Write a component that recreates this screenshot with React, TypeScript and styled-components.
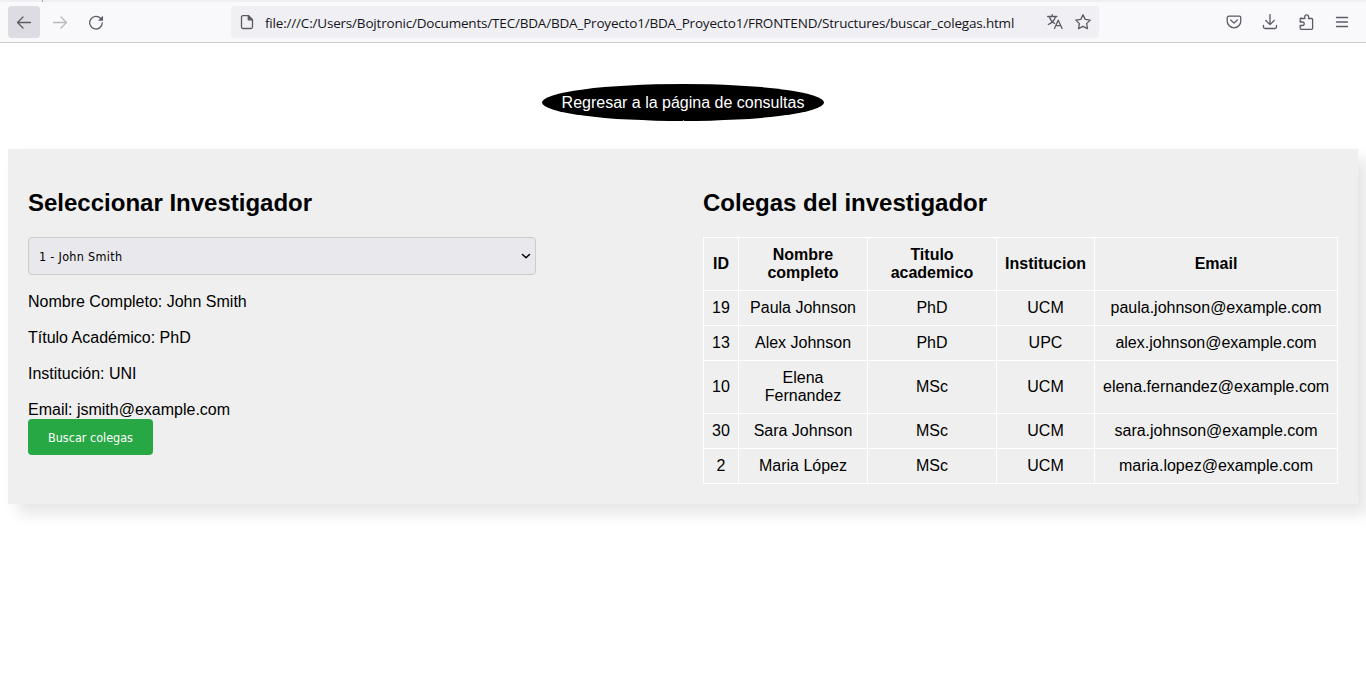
import React from "react";
import styled, { createGlobalStyle } from "styled-components";

const GlobalStyle = createGlobalStyle`
  * { box-sizing: border-box; }
  body { margin: 0; background: #fff; color: #000; font: 16px/18px "Liberation Sans", Arial, sans-serif; }
`;

const Page = styled.div`
  height: 684px;
  overflow: hidden;
`;
const TabStrip = styled.div`
  display: flex;
  height: 2px;
  background: #f0f0f4;
`;
const TabLine = styled.div`
  width: 1px;
  height: 2px;
  margin-left: 42px;
  background: #a5a5a9;
`;
const Toolbar = styled.header`
  display: flex;
  align-items: center;
  height: 41px;
  padding: 0 8px;
  background: #f9f9fb;
  border-bottom: 1px solid #ccccce;
`;
const NavButton = styled.button<{ $active?: boolean; $dim?: boolean }>`
  display: grid;
  place-items: center;
  width: 32px;
  height: 32px;
  margin: 0 4px 0 0;
  padding: 0;
  border: 0;
  border-radius: 4px;
  color: #5b5b66;
  background: ${(p) => (p.$active ? "#dcdce2" : "transparent")};
  opacity: ${(p) => (p.$dim ? 0.4 : 1)};
`;
const AddressBar = styled.div`
  display: flex;
  align-items: center;
  width: 868px;
  height: 32px;
  margin-left: 115px;
  padding: 0 8px;
  border-radius: 4px;
  background: #f0f0f4;
  color: #5b5b66;
`;
const Address = styled.span`
  flex: 1;
  margin-left: 10px;
  padding-top: 2px;
  color: #15141a;
  font: 13.5px/20px "Open Sans", "Noto Sans", sans-serif;
  letter-spacing: -0.19px;
  white-space: nowrap;
`;
const AddressActions = styled.div`
  display: flex;
  gap: 12px;
`;
const ToolbarActions = styled.div`
  display: flex;
  gap: 20px;
  margin-left: auto;
  padding-right: 8px;
  color: #5b5b66;
`;
const Icon = styled.svg`
  display: block;
  width: 16px;
  height: 16px;
  fill: none;
  stroke: currentColor;
  stroke-width: 1.3;
  stroke-linecap: round;
  stroke-linejoin: round;
`;

const LinkRow = styled.nav`
  display: flex;
  justify-content: center;
  padding: 41px 0 28px;
`;
const BackLink = styled.a`
  display: flex;
  flex-direction: column;
  align-items: center;
  justify-content: space-between;
  width: 282px;
  height: 37px;
  padding-top: 10px;
  border-radius: 50%;
  background: #000;
  color: #fff;
  &::after {
    content: "";
    width: 1px;
    height: 1px;
    background: #aaa;
  }
`;
const Panel = styled.main`
  display: grid;
  grid-template-columns: 635px 635px;
  column-gap: 40px;
  height: 355px;
  margin: 0 8px;
  padding: 20px;
  background: #efefef;
  box-shadow: 10px 10px 15px rgba(0, 0, 0, 0.1);
`;
const Title = styled.h2`
  margin: 20px 0 21px;
  font-size: 24px;
  line-height: 27px;
`;
const SelectBox = styled.div`
  display: flex;
  align-items: center;
  justify-content: space-between;
  width: 508px;
  height: 38px;
  padding: 0 1px 0 10px;
  border: 1px solid #ccc;
  border-radius: 4px;
  background: #e9e9ed;
  font: 12.5px/18px "DejaVu Sans Condensed", "DejaVu Sans", sans-serif;
  letter-spacing: 0.3px;
`;
const SelectValue = styled.span`
  padding-top: 2px;
`;
const Details = styled.div`
  display: grid;
  gap: 18px;
  margin-top: 18px;
`;
const SearchButton = styled.button`
  display: block;
  width: 125px;
  height: 36px;
  padding: 2px 0 0;
  border: 0;
  border-radius: 4px;
  background: #28a745;
  color: #fff;
  font: 12.5px/18px "DejaVu Sans Condensed", "DejaVu Sans", sans-serif;
`;
const Table = styled.table`
  width: 635px;
  table-layout: fixed;
  border-collapse: collapse;
  text-align: center;
`;
const Col = styled.col<{ $w: number }>`
  width: ${(p) => p.$w}px;
`;
const HeadCell = styled.th`
  padding: 8px;
  border: 1px solid #fff;
`;
const Cell = styled.td`
  padding: 8px;
  border: 1px solid #fff;
`;

const columns = [
  { label: "ID", width: 35 },
  { label: "Nombre completo", width: 129 },
  { label: "Titulo academico", width: 129 },
  { label: "Institucion", width: 98 },
  { label: "Email", width: 243 },
];
const colleagues = [
  ["19", "Paula Johnson", "PhD", "UCM", "paula.johnson@example.com"],
  ["13", "Alex Johnson", "PhD", "UPC", "alex.johnson@example.com"],
  ["10", "Elena Fernandez", "MSc", "UCM", "elena.fernandez@example.com"],
  ["30", "Sara Johnson", "MSc", "UCM", "sara.johnson@example.com"],
  ["2", "Maria López", "MSc", "UCM", "maria.lopez@example.com"],
];
const details = [
  "Nombre Completo: John Smith",
  "Título Académico: PhD",
  "Institución: UNI",
  "Email: jsmith@example.com",
];

export default function App() {
  return (
    <Page>
      <GlobalStyle />
      <TabStrip><TabLine /></TabStrip>
      <Toolbar>
        <NavButton $active>
          <Icon viewBox="0 0 16 16"><path d="M14.5 8.5h-13M7 3 1.5 8.5 7 14" /></Icon>
        </NavButton>
        <NavButton $dim>
          <Icon viewBox="0 0 16 16"><path d="M1.5 8.5h13M9 3l5.5 5.5L9 14" /></Icon>
        </NavButton>
        <NavButton>
          <Icon viewBox="0 0 16 16">
            <path d="M12.7 4.5A6.3 6.3 0 1 0 14.3 9" />
            <path d="M15 1.800v5h-5z" fill="currentColor" stroke="none" />
          </Icon>
        </NavButton>
        <AddressBar>
          <Icon viewBox="0 0 16 16">
            <path d="M4 1.600h5.500l4 4v7.400a1.500 1.500 0 0 1-1.500 1.500H4A1.500 1.500 0 0 1 2.500 13V3.100A1.500 1.500 0 0 1 4 1.600z" />
            <path d="M9.300 1.800v4h4z" fill="currentColor" />
          </Icon>
          <Address>file:///C:/Users/Bojtronic/Documents/TEC/BDA/BDA_Proyecto1/BDA_Proyecto1/FRONTEND/Structures/buscar_colegas.html</Address>
          <AddressActions>
            <Icon viewBox="0 0 16 16"><path d="M.6 2.500h9.300M5.200.7v1.800M2.300 2.700C3.300 6 5 8 7.700 9.500M8.500 2.700C7.500 6.200 5 8.800 1.300 10.500M7.500 14.500l3.700-8.300 3.900 8.300M8.800 11.700h5" /></Icon>
            <Icon viewBox="0 0 16 16"><path d="m8 .8 2.200 4.600 5 .7-3.600 3.500.9 5L8 12.300l-4.500 2.300.9-5L.8 6.100l5-.7z" /></Icon>
          </AddressActions>
        </AddressBar>
        <ToolbarActions>
          <Icon viewBox="0 0 16 16"><path d="M2.800 2.200h10.400a1.600 1.600 0 0 1 1.600 1.600V7A6.800 6.800 0 0 1 1.200 7V3.800a1.600 1.600 0 0 1 1.600-1.600zM4.700 6 8 9.100 11.300 6" /></Icon>
          <Icon viewBox="0 0 16 16"><path d="M8 .5v10M3.800 6.500 8 10.600l4.200-4.100M1.500 11.500V13a1.500 1.500 0 0 0 1.500 1.500h10a1.500 1.500 0 0 0 1.500-1.500v-1.500" /></Icon>
          <Icon viewBox="0 0 16 16"><path d="M3.200 4.500h3.600V2.700a1.900 1.900 0 0 1 3.800 0v1.800h3a1 1 0 0 1 1 1v8.800a1 1 0 0 1-1 1H3.200a1 1 0 0 1-1-1v-2.800h2.300a1.700 1.700 0 0 0 0-3.500H2.200v-3a1 1 0 0 1 1-1z" /></Icon>
          <Icon viewBox="0 0 16 16"><path d="M2.500 3.500h11M2.500 8h11M2.500 12.500h11" /></Icon>
        </ToolbarActions>
      </Toolbar>
      <LinkRow><BackLink>Regresar a la página de consultas</BackLink></LinkRow>
      <Panel>
        <section>
          <Title>Seleccionar Investigador</Title>
          <SelectBox>
            <SelectValue>1 - John Smith</SelectValue>
            <Icon viewBox="0 0 16 16">
              <path d="m4.500 6.500 3.500 3.300 3.500-3.300" stroke="#000" strokeWidth="1.500" />
            </Icon>
          </SelectBox>
          <Details>{details.map((line) => <div key={line}>{line}</div>)}</Details>
          <SearchButton>Buscar colegas</SearchButton>
        </section>
        <section>
          <Title>Colegas del investigador</Title>
          <Table>
            <colgroup>{columns.map((c) => <Col key={c.label} $w={c.width} />)}</colgroup>
            <thead>
              <tr>{columns.map((c) => <HeadCell key={c.label}>{c.label}</HeadCell>)}</tr>
            </thead>
            <tbody>
              {colleagues.map((row) => (
                <tr key={row[0]}>{row.map((value) => <Cell key={value}>{value}</Cell>)}</tr>
              ))}
            </tbody>
          </Table>
        </section>
      </Panel>
    </Page>
  );
}
